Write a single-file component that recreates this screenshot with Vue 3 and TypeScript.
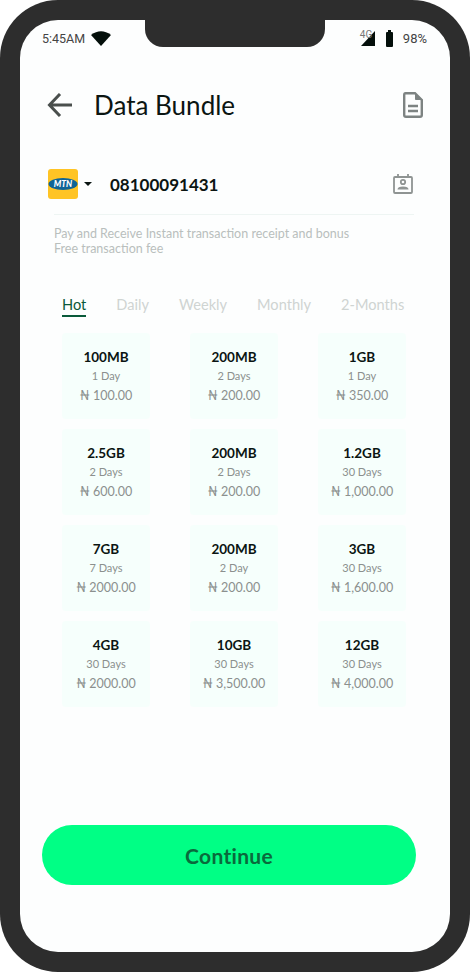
<script setup lang="ts">
interface Bundle {
  size: string
  days: string
  price: string
}

const tabs = ['Hot', 'Daily', 'Weekly', 'Monthly', '2-Months']

const bundles: Bundle[] = [
  { size: '100MB', days: '1 Day', price: '₦ 100.00' },
  { size: '200MB', days: '2 Days', price: '₦ 200.00' },
  { size: '1GB', days: '1 Day', price: '₦ 350.00' },
  { size: '2.5GB', days: '2 Days', price: '₦ 600.00' },
  { size: '200MB', days: '2 Days', price: '₦ 200.00' },
  { size: '1.2GB', days: '30 Days', price: '₦ 1,000.00' },
  { size: '7GB', days: '7 Days', price: '₦ 2000.00' },
  { size: '200MB', days: '2 Day', price: '₦ 200.00' },
  { size: '3GB', days: '30 Days', price: '₦ 1,600.00' },
  { size: '4GB', days: '30 Days', price: '₦ 2000.00' },
  { size: '10GB', days: '30 Days', price: '₦ 3,500.00' },
  { size: '12GB', days: '30 Days', price: '₦ 4,000.00' }
]
</script>

<template>
  <div class="phone">
    <div class="notch"></div>
    <div class="screen">
      <div class="status">
        <div class="status-left">
          <span>5:45AM</span>
          <svg width="20" height="15" viewBox="0 0 20 15"><path d="M0 4 Q10 -3.500 20 4 L10 15 Z" fill="#040f0b" /></svg>
        </div>
        <div class="status-right">
          <div class="signal">
            <span class="signal-label">4G</span>
            <svg width="15" height="15" viewBox="0 0 15 15"><path d="M14 0 V15 H0 Z" fill="#040f0b" /></svg>
          </div>
          <svg class="battery" width="7" height="17" viewBox="0 0 7 17"><path d="M2 0 H5 V2 H6 Q7 2 7 3 V16 Q7 17 6 17 H1 Q0 17 0 16 V3 Q0 2 1 2 H2 Z" fill="#040f0b" /></svg>
          <span class="battery-level">98%</span>
        </div>
      </div>

      <header class="title-bar">
        <svg class="back" width="26" height="24" viewBox="0 0 26 24" fill="none" stroke="#4a4f4d" stroke-width="3"><path d="M25 12 H3 M13 1 L2.500 12 L13 23" /></svg>
        <h1>Data Bundle</h1>
        <svg class="receipt" width="20" height="26" viewBox="0 0 20 26" fill="none" stroke="#7d8382" stroke-width="2.400"><path d="M2.500 1.200 H12 L18.800 8 V23 Q18.800 24.800 17 24.800 H3 Q1.200 24.800 1.200 23 V3 Q1.200 1.200 2.500 1.200 Z" /><path d="M5 14 H15 M5 19 H15" /><path d="M12.500 2 V7.500 H18" fill="#7d8382" stroke-width="1" /></svg>
      </header>

      <div class="phone-row">
        <div class="logo">
          <svg width="30" height="30" viewBox="0 0 30 30">
            <rect width="30" height="30" rx="3" fill="#ffc425" />
            <ellipse cx="15" cy="15" rx="14.500" ry="6" fill="#0f6496" />
            <text x="15" y="18" text-anchor="middle" class="logo-text">MTN</text>
          </svg>
        </div>
        <span class="caret"></span>
        <span class="number">08100091431</span>
        <svg class="contact" width="20" height="20" viewBox="0 0 20 20" fill="none" stroke="#8f9493" stroke-width="1.800"><rect x="1" y="3" width="18" height="16" rx="1" /><path d="M5 0 V3 M15 0 V3" /><circle cx="10" cy="8" r="2.200" /><path d="M4.500 15.500 Q4.500 12.500 10 12.500 Q15.500 12.500 15.500 15.500 Z" fill="#8f9493" stroke="none" /></svg>
      </div>

      <p class="note">Pay and Receive Instant transaction receipt and bonus<br />Free transaction fee</p>

      <nav class="tabs">
        <span v-for="(tab, index) in tabs" :key="tab" class="tab" :class="{ active: index === 0 }">{{ tab }}</span>
      </nav>

      <section class="grid">
        <div v-for="(item, index) in bundles" :key="index" class="card">
          <div class="size">{{ item.size }}</div>
          <div class="days">{{ item.days }}</div>
          <div class="price">{{ item.price }}</div>
        </div>
      </section>

      <button type="button" class="continue">Continue</button>
    </div>
  </div>
</template>

<style>
body {
  background: #fff;
}
</style>

<style scoped>
.phone {
  position: relative;
  width: 470px;
  height: 972px;
  box-sizing: border-box;
  padding: 20px;
  background: #2d2d2d;
  border-radius: 58px;
  font-family: Lato, 'Noto Sans', sans-serif;
}

.notch {
  position: absolute;
  top: 20px;
  left: 145px;
  width: 180px;
  height: 27px;
  background: #2d2d2d;
  border-radius: 0 0 18px 18px;
}

.screen {
  height: 932px;
  background: #fdfefe;
  border-radius: 38px;
  display: flex;
  flex-direction: column;
}

.status {
  display: flex;
  justify-content: space-between;
  align-items: center;
  height: 20px;
  margin-top: 8px;
  padding: 0 23px 0 22px;
  font-family: Roboto, sans-serif;
  font-size: 12.500px;
  color: #444;
}

.status-left,
.status-right {
  display: flex;
  align-items: center;
}

.status-left {
  gap: 6px;
}

.battery-level {
  font-size: 13px;
}

.signal {
  position: relative;
  width: 15px;
  height: 15px;
  margin-right: 10px;
}

.signal svg {
  display: block;
}

.signal-label {
  position: absolute;
  top: -2px;
  left: -1px;
  font-size: 10px;
  color: #777;
}

.battery {
  margin-right: 10px;
}

.title-bar {
  display: flex;
  align-items: center;
  margin-top: 41px;
  padding: 0 27px 0 27px;
  height: 32px;
}

h1 {
  flex: 1;
  margin: 0 0 0 21px;
  font-size: 26px;
  font-weight: 400;
  color: #0b1512;
}

.phone-row {
  display: flex;
  align-items: center;
  margin: 48px 0 0 28px;
  width: 365px;
  height: 30px;
}

.logo {
  width: 30px;
  height: 30px;
}

.logo svg {
  display: block;
}

.logo-text {
  font-size: 8.500px;
  font-weight: 900;
  font-style: italic;
  fill: #fff;
  font-family: Lato, sans-serif;
}

.caret {
  width: 0;
  height: 0;
  margin: 0 0 0 6px;
  border-left: 4.500px solid transparent;
  border-right: 4.500px solid transparent;
  border-top: 4px solid #0b1512;
}

.number {
  flex: 1;
  margin-left: 18px;
  font-size: 17px;
  font-weight: 700;
  color: #0b1512;
}

.note {
  margin: 15px 0 0 34px;
  width: 360px;
  padding-top: 11px;
  border-top: 1px solid #eef5f3;
  font-size: 12.500px;
  line-height: 15px;
  color: #b9bfbd;
}

.tabs {
  display: flex;
  margin: 40px 0 0 42px;
  gap: 30px;
  font-size: 14.600px;
  color: #cfd4d2;
}

.tab {
  padding-bottom: 1px;
  line-height: 18px;
}

.tab.active {
  color: #0a5a3a;
  border-bottom: 2px solid #0a5a3a;
}

.grid {
  display: grid;
  grid-template-columns: repeat(3, 88px);
  grid-auto-rows: 86px;
  column-gap: 40px;
  row-gap: 10px;
  margin: 16px 0 0 42px;
}

.card {
  background: #f6fffc;
  border-radius: 4px;
  text-align: center;
  padding-top: 16px;
  box-sizing: border-box;
}

.size {
  font-size: 13.500px;
  font-weight: 700;
  line-height: 16px;
  color: #0b1512;
}

.days {
  margin-top: 4px;
  font-size: 11px;
  line-height: 13px;
  color: #8b908e;
}

.price {
  margin-top: 6px;
  font-size: 12.500px;
  line-height: 16px;
  color: #8b908e;
}

.continue {
  margin: 118px 0 0 22px;
  width: 374px;
  height: 60px;
  border: none;
  border-radius: 30px;
  background: #00ff85;
  font-family: Lato, sans-serif;
  font-size: 21px;
  font-weight: 700;
  letter-spacing: 0.3px;
  color: #0a6a3c;
}
</style>
